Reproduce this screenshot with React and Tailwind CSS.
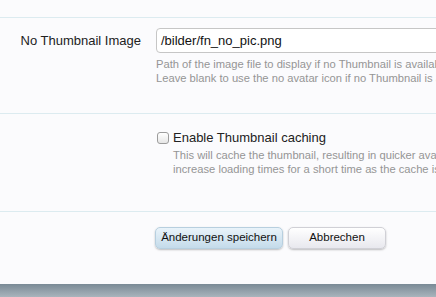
import React from 'react';

export default function App() {
  return (
    <div className="w-[436px] h-[297px] bg-[#fbfbfd] flex flex-col overflow-hidden font-['Liberation_Sans',Arial,sans-serif]">
      <div className="h-[18px] shrink-0 border-b border-[#dcebf0]" />

      {/* path option */}
      <div className="h-[96px] shrink-0 flex border-b border-[#dcebf0] pt-[10px]">
        <div className="w-[141px] shrink-0 text-right text-[13px] text-[#222] leading-[25px]">No Thumbnail Image</div>
        <div className="pl-[15px] flex-1 min-w-0 overflow-hidden">
          <div className="h-[25px] w-[320px] bg-white border border-[#c6c6c6] rounded-[4px] pl-[4px] text-[13px] leading-[23px] text-[#111] whitespace-nowrap">
            /bilder/fn_no_pic.png
          </div>
          <div className="mt-[4px] text-[11.2px] leading-[14px] text-[#959595] whitespace-nowrap">
            <p>Path of the image file to display if no Thumbnail is available.</p>
            <p>Leave blank to use the no avatar icon if no Thumbnail is available.</p>
          </div>
        </div>
      </div>

      {/* caching option */}
      <div className="h-[98px] shrink-0 flex border-b border-[#dcebf0] pt-[16px] pl-[157px]">
        <div className="flex-1 min-w-0 overflow-hidden">
          <div className="flex items-center h-[16px]">
            <span className="w-[12px] h-[12px] rounded-[3px] border border-[#9c9c9c] bg-gradient-to-b from-white to-[#e6e6e6] shrink-0" />
            <span className="ml-[4px] text-[13px] text-[#222] whitespace-nowrap">Enable Thumbnail caching</span>
          </div>
          <div className="mt-[2px] pl-[16px] text-[11.2px] leading-[14px] text-[#959595] whitespace-nowrap">
            <p>This will cache the thumbnail, resulting in quicker avatar loading, but might</p>
            <p>increase loading times for a short time as the cache is being built.</p>
          </div>
        </div>
      </div>

      {/* buttons */}
      <div className="flex-1 flex items-start pt-[15px] pl-[155px] gap-[5px]">
        <button className="h-[22px] w-[128px] rounded-[5px] border border-[#b7cfdf] bg-gradient-to-b from-[#e9f3fa] to-[#c4dbea] shadow-[0_1px_2px_rgba(0,0,0,0.25)] text-[11.5px] text-[#111]">
          Änderungen speichern
        </button>
        <button className="h-[22px] w-[98px] rounded-[5px] border border-[#d0d0d6] bg-gradient-to-b from-white to-[#e8e8ee] shadow-[0_1px_2px_rgba(0,0,0,0.25)] text-[11.5px] text-[#111]">
          Abbrechen
        </button>
      </div>

      <div className="h-[13px] shrink-0 bg-gradient-to-b from-[#7a8a96] to-[#a9b4bc]" />
    </div>
  );
}
